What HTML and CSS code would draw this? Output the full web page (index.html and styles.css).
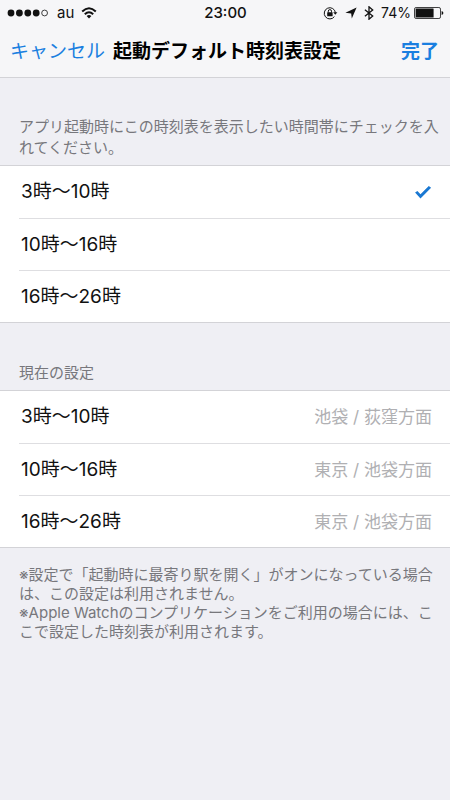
FILE: index.html
```html
<!DOCTYPE html>
<html lang="ja">
<head>
<meta charset="utf-8">
<meta name="viewport" content="width=device-width, initial-scale=1">
<title>起動デフォルト時刻表設定</title>
<link rel="stylesheet" href="styles.css">
</head>
<body>
<header class="top">
  <div class="status">
    <div class="status-side">
      <svg class="signal" width="42" height="8" viewBox="0 0 42 8" aria-hidden="true">
        <circle cx="4" cy="4" r="3.4"/><circle cx="12.4" cy="4" r="3.4"/><circle cx="20.8" cy="4" r="3.4"/><circle cx="29.2" cy="4" r="3.4"/>
        <circle cx="37.6" cy="4" r="2.9" fill="none" stroke="#111" stroke-width="0.8"/>
      </svg>
      <span class="carrier">au</span>
      <svg width="16" height="12" viewBox="0 0 16 12" aria-hidden="true">
        <g fill="none" stroke="#111" stroke-width="2">
          <path d="M1.2 4.5Q8 -1.9 14.8 4.5"/>
          <path d="M3.8 7.2Q8 3.2 12.2 7.2"/>
        </g>
        <path d="M5.6 9Q8 6.9 10.4 9L8 11.5Z"/>
      </svg>
    </div>
    <time class="clock">23:00</time>
    <div class="status-side status-right">
      <svg width="15" height="14" viewBox="0 0 15 14" aria-hidden="true">
        <path d="M11.4 10.6A5.6 5.6 0 1 1 12.4 6.6" fill="none" stroke="#111" stroke-width="1"/>
        <path d="M10.2 6.2H14.4L12.3 8.8Z"/>
        <rect x="4.2" y="6.2" width="5.4" height="4" rx=".5"/>
        <path d="M5.3 6.5V5.2a1.6 1.6 0 0 1 3.2 0V6.5" fill="none" stroke="#111" stroke-width="1"/>
      </svg>
      <svg width="12" height="12" viewBox="0 0 12 12" aria-hidden="true"><path d="M11.6.6 6.8 11.4 6.2 6.4.4 5.8Z"/></svg>
      <svg width="10" height="14" viewBox="0 0 10 14" aria-hidden="true"><path d="M.9 3.8 8.7 10.1 5 13.2V.8L8.7 3.9.9 10.2" fill="none" stroke="#111" stroke-width="1.3"/></svg>
      <div class="power">
        <span class="percent">74%</span>
        <svg width="30" height="12" viewBox="0 0 30 12" aria-hidden="true">
          <rect x=".5" y=".5" width="26" height="11" rx="1.6" fill="none" stroke="#111" stroke-width=".8"/>
          <rect x="1.6" y="1.6" width="18" height="8.8" rx=".5"/>
          <path d="M27.6 4Q29.4 4.4 29.4 6T27.6 8Z"/>
        </svg>
      </div>
    </div>
  </div>
  <nav class="nav">
    <button class="nav-button" type="button">キャンセル</button>
    <h1 class="title">起動デフォルト時刻表設定</h1>
    <button class="nav-button done" type="button">完了</button>
  </nav>
</header>
<main>
  <section>
    <p class="caption" id="slots">アプリ起動時にこの時刻表を表示したい時間帯にチェックを入れてください。</p>
    <div class="list" role="group" aria-labelledby="slots">
      <label class="row">3時〜10時<input class="check" type="checkbox" checked></label>
      <label class="row">10時〜16時<input class="check" type="checkbox"></label>
      <label class="row">16時〜26時<input class="check" type="checkbox"></label>
    </div>
  </section>
  <section class="current">
    <h2 class="caption">現在の設定</h2>
    <dl class="list">
      <div class="row"><dt>3時〜10時</dt><dd class="value">池袋 / 荻窪方面</dd></div>
      <div class="row"><dt>10時〜16時</dt><dd class="value">東京 / 池袋方面</dd></div>
      <div class="row"><dt>16時〜26時</dt><dd class="value">東京 / 池袋方面</dd></div>
    </dl>
    <p class="notes">※設定で「起動時に最寄り駅を開く」がオンになっている場合は、この設定は利用されません。<br>※Apple Watchのコンプリケーションをご利用の場合には、ここで設定した時刻表が利用されます。</p>
  </section>
</main>
</body>
</html>
```
FILE: styles.css
```css
* {
  box-sizing: border-box;
}

body {
  margin: 0;
  min-height: 100vh;
  background: #efeff4;
  color: #111;
  font-family: Inter, "Noto Sans CJK JP", sans-serif;
}

h1, h2, p, dl, dd {
  margin: 0;
}

svg {
  flex: none;
  fill: #111;
}

.top {
  background: #f6f6f8;
  border-bottom: 1px solid #d3d3d7;
}

.status {
  display: flex;
  align-items: center;
  height: 25px;
  padding: 0 6px 0 7px;
  font-size: 15px;
  line-height: 24px;
}

.status-side {
  display: flex;
  flex: 1;
  align-items: center;
  gap: 7px;
}

.status-right {
  justify-content: flex-end;
}

.power {
  display: flex;
  align-items: center;
  gap: 3px;
}

.percent {
  font-size: 14px;
}

.carrier {
  margin-left: 1px;
}

.clock {
  font-weight: 500;
}

.nav {
  display: flex;
  align-items: center;
  justify-content: space-between;
  height: 52px;
  padding: 2px 11px 0 10px;
}

.nav-button {
  padding: 0;
  border: 0;
  background: none;
  color: #1a7fe0;
  font: inherit;
  font-size: 19px;
  line-height: 28px;
}

.nav-button.done {
  font-weight: 700;
}

.title {
  flex: 1;
  padding-left: 8px;
  color: #000;
  font-size: 19px;
  font-weight: 700;
  line-height: 28px;
}

.caption {
  padding: 38px 8px 7px 19px;
  color: #77777c;
  font-size: 15px;
  font-weight: 400;
  line-height: 21px;
}

.current {
  padding-top: 1px;
}

.list {
  background: #fff;
  border-bottom: 1px solid #d3d3d7;
  border-top: 1px solid #d3d3d7;
}

.row {
  display: flex;
  align-items: center;
  justify-content: space-between;
  min-height: 52px;
  margin-left: 19px;
  padding: 0 18px 0 2px;
  font-size: 19px;
  line-height: 28px;
}

.row + .row {
  border-top: 1px solid #dedee1;
}

.check {
  width: 18px;
  height: 14px;
  margin: 0;
  appearance: none;
}

.check:checked {
  background: #1a78d2;
  clip-path: polygon(6% 53%, 19% 43%, 36% 66%, 82% 8%, 95% 20%, 36% 96%);
}

.value {
  color: #b0b0b3;
  font-size: 17px;
}

.notes {
  padding: 17px 8px 20px 19px;
  color: #77777c;
  font-size: 15px;
  line-height: 19px;
}
```
